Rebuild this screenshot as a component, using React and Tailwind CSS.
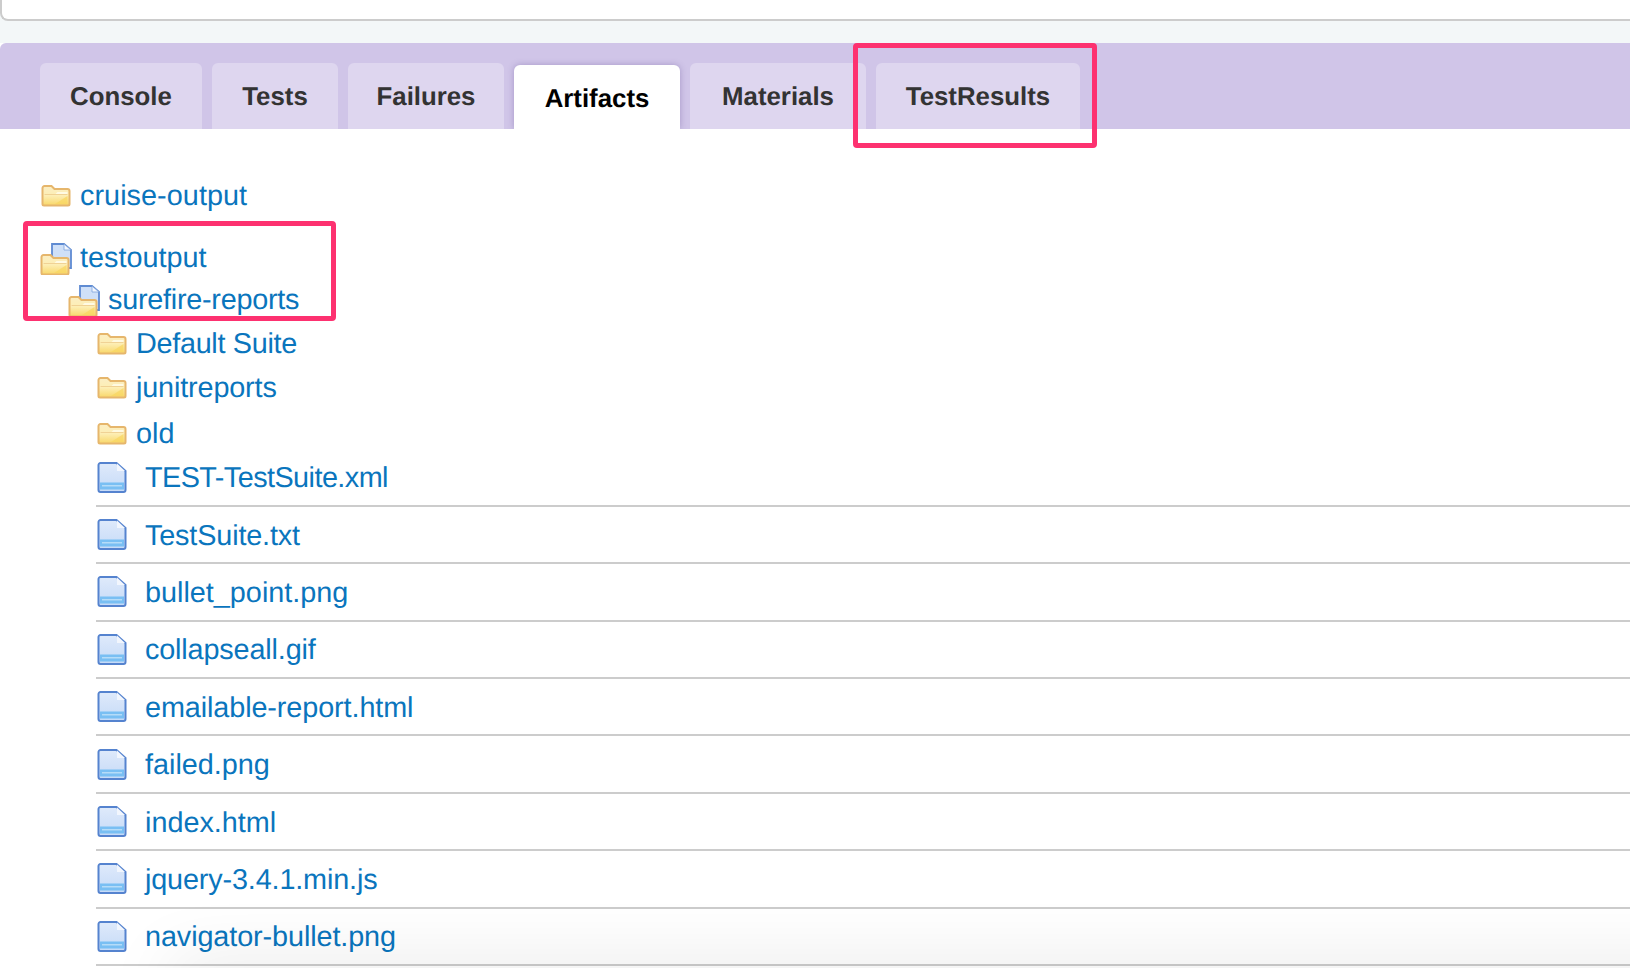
import React from "react";

const TABS = [
  { name: "Console", width: "w-[162px]" },
  { name: "Tests", width: "w-[126px]" },
  { name: "Failures", width: "w-[156px]" },
  { name: "Artifacts", width: "w-[166px]", active: true },
  { name: "Materials", width: "w-[176px]" },
  { name: "TestResults", width: "w-[204px]" },
];

const FOLDERS = [
  { name: "Default Suite", mt: "mt-[15px]", tracking: "tracking-[-0.3px]" },
  { name: "junitreports", mt: "mt-[20.500px]", tracking: "tracking-[-0.15px]" },
  { name: "old", mt: "mt-[22px]", tracking: "" },
];

const FILES = [
  { name: "TEST-TestSuite.xml", tracking: "tracking-[-0.55px]" },
  { name: "TestSuite.txt", tracking: "tracking-[-0.15px]" },
  { name: "bullet_point.png", tracking: "" },
  { name: "collapseall.gif", tracking: "tracking-[-0.15px]" },
  { name: "emailable-report.html", tracking: "tracking-[-0.1px]" },
  { name: "failed.png", tracking: "" },
  { name: "index.html", tracking: "" },
  { name: "jquery-3.4.1.min.js", tracking: "tracking-[-0.15px]" },
  { name: "navigator-bullet.png", tracking: "tracking-[-0.1px]" },
];

function FolderShape() {
  return (
    <>
      <path d="M1.500 5 a2 2 0 0 1 2-2 h7 l3 3 h13 a2 2 0 0 1 2 2 v13 a1.500 1.500 0 0 1-1.500 1.500 h-24 a1.500 1.500 0 0 1-1.500-1.500 z" fill="url(#folderFill)" stroke="#e6b66c" strokeWidth="2" />
      <path d="M3.500 11 h11 l2-2 h10 v2.500 h-23 z" fill="#fffbe8" opacity="0.9" />
      <path d="M3.500 11.500 h23" stroke="#ecc987" strokeWidth="0.800" fill="none" />
      <path d="M14 21 L26.500 13 V21 z" fill="#f8d55f" opacity="0.7" />
    </>
  );
}

function FolderIcon() {
  return (
    <svg width="30" height="24" viewBox="0 0 30 24" className="shrink-0 -mt-[3px] blur-[0.3px]" aria-hidden>
      <FolderShape />
    </svg>
  );
}

function FolderFileIcon() {
  return (
    <svg width="32" height="33" viewBox="0 0 32 33" className="shrink-0 blur-[0.3px]" aria-hidden>
      <path d="M12 2 h12 l7 6 v18 h-19 z" fill="#cfe0f8" stroke="#5f8bd2" strokeWidth="1.800" />
      <path d="M24 2 v6 h7 z" fill="#f2f6fd" stroke="#7fa3dc" strokeWidth="0.800" />
      <g transform="translate(0 10)">
        <FolderShape />
      </g>
    </svg>
  );
}

function FileIcon() {
  return (
    <svg width="30" height="31" viewBox="0 0 30 31" className="shrink-0 blur-[0.3px]" aria-hidden>
      <path d="M1.500 3 a2 2 0 0 1 2-2 h16 l9 8 v19 a2 2 0 0 1-2 2 h-23 a2 2 0 0 1-2-2 z" fill="url(#fileFill)" stroke="#5583cf" strokeWidth="2" />
      <path d="M20 1.500 v7.500 h8 z" fill="#f2f6fd" />
      <rect x="3" y="20.500" width="24" height="7" fill="#79bff3" />
      <rect x="5" y="23" width="20" height="1.500" fill="#b5dcf8" />
    </svg>
  );
}

export default function App() {
  return (
    <div className="relative w-full h-[968px] overflow-hidden bg-white font-['Liberation_Sans',Arial,sans-serif] [text-rendering:geometricPrecision]">
      <svg width="0" height="0" className="absolute" aria-hidden>
        <defs>
          <linearGradient id="folderFill" x1="0" y1="0" x2="0" y2="1">
            <stop offset="0" stopColor="#fbeec4" />
            <stop offset="0.5" stopColor="#fdeeb4" />
            <stop offset="1" stopColor="#f8d768" />
          </linearGradient>
          <linearGradient id="fileFill" x1="0" y1="0" x2="0" y2="1">
            <stop offset="0" stopColor="#dfeafb" />
            <stop offset="1" stopColor="#c5daf7" />
          </linearGradient>
        </defs>
      </svg>

      {/* top input edge */}
      <div className="bg-[#f3f7f8] h-[43px]">
        <div className="h-[21px] bg-white border-b-2 border-l-2 border-[#cccccc] rounded-bl-lg" />
      </div>

      {/* tabs */}
      <div className="h-[86px] overflow-hidden bg-[#d0c5e8] rounded-tl-md pl-[40px] flex items-end gap-[10px]">
        {TABS.map((tab) =>
          tab.active ? (
            <div key={tab.name} className={`${tab.width} h-[64px] pt-[19px] text-center bg-white rounded-t-md text-[25.800px] leading-[30px] font-bold text-black shadow-[0_0_6px_rgba(90,70,140,0.35)]`}>
              {tab.name}
            </div>
          ) : (
            <div key={tab.name} className={`${tab.width} h-[66px] pt-[19px] text-center bg-[#ded6ef] rounded-t-md text-[25.800px] leading-[30px] font-bold text-[#333333]`}>
              {tab.name}
            </div>
          )
        )}
      </div>

      {/* artifact tree */}
      <div className="pl-[41px] pt-[51px] text-[28.800px] leading-[33px] text-[#0a75bd]">
        <div className="flex items-center gap-[9px] h-[33px]">
          <FolderIcon />
          <span className="tracking-[0.05px]">cruise-output</span>
        </div>
        <div className="flex items-center gap-[8px] h-[33px] mt-[29px] -ml-[1px]">
          <FolderFileIcon />
          <span>testoutput</span>
        </div>
        <div className="flex items-center gap-[8px] h-[33px] mt-[9px] ml-[27px]">
          <FolderFileIcon />
          <span className="tracking-[-0.25px]">surefire-reports</span>
        </div>
        <div className="ml-[56px]">
          {FOLDERS.map((f) => (
            <div key={f.name} className={`flex items-center gap-[9px] h-[24px] ${f.mt}`}>
              <FolderIcon />
              <span className={f.tracking}>{f.name}</span>
            </div>
          ))}
          <div className="mt-[3px] -ml-[1px]">
            {FILES.map((file) => (
              <div key={file.name} className="h-[57.400px] pl-[1px] border-b-2 border-[#cccccc] flex items-center gap-[18px]">
                <FileIcon />
                <span className={`pt-[3px] ${file.tracking}`}>{file.name}</span>
              </div>
            ))}
          </div>
        </div>
      </div>

      {/* bottom window shadow */}
      <div className="absolute left-[170px] -right-[100px] -bottom-[30px] h-[30px] shadow-[0_0_70px_rgba(0,0,0,0.14)] pointer-events-none" />

      {/* pink annotation boxes */}
      <div className="absolute left-[853px] top-[43px] w-[244px] h-[105px] border-[5px] border-[#fd3170] rounded-sm pointer-events-none" />
      <div className="absolute left-[23px] top-[221px] w-[313px] h-[100px] border-[5px] border-[#fd3170] rounded-sm pointer-events-none" />
    </div>
  );
}
